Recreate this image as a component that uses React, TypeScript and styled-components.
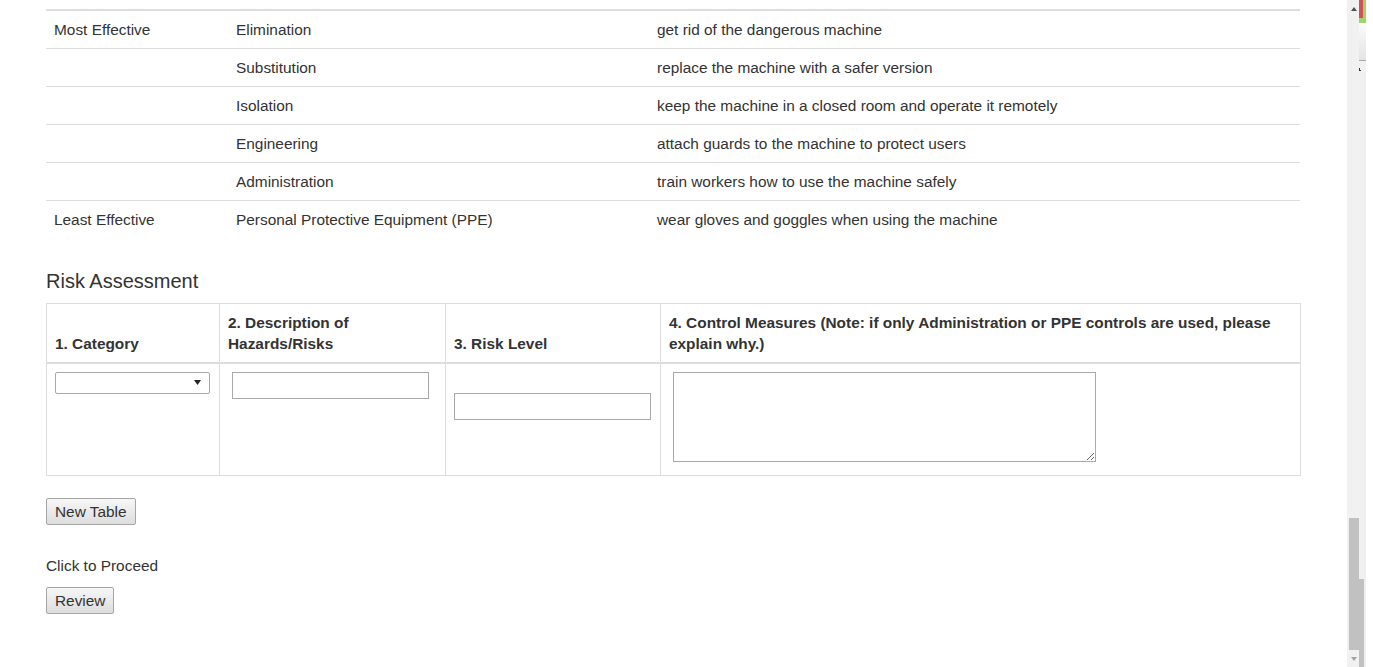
import React from "react";
import styled, { createGlobalStyle } from "styled-components";

const Global = createGlobalStyle`
  html, body { margin: 0; padding: 0; background: #fff; overflow: hidden; }
  body {
    font-family: "Liberation Sans", Arial, sans-serif;
    font-size: 15.4px;
    color: #333;
  }
  * { box-sizing: border-box; }
`;

const Page = styled.div`
  display: flex;
  height: 667px;
  width: 1373px;
`;

const Main = styled.main`
  flex: 0 0 1347px;
  padding: 9px 0 0 46px;
`;

const Content = styled.div`
  display: flex;
  flex-direction: column;
  align-items: flex-start;
  width: 1254px;
`;

const ControlTable = styled.table`
  width: 1254px;
  table-layout: fixed;
  border-collapse: collapse;
  border-spacing: 0;
`;

const ControlCell = styled.td<{ $first?: boolean }>`
  padding: 8px;
  line-height: 21px;
  vertical-align: top;
  border-top: ${(p) => (p.$first ? "2px" : "1px")} solid #ddd;
  text-align: left;
  white-space: nowrap;
`;

const SectionTitle = styled.h3`
  margin: 32px 0 11px;
  font-size: 20px;
  font-weight: normal;
  line-height: 22px;
  color: #333;
`;

const RiskTable = styled.table`
  width: 1254px;
  table-layout: fixed;
  border-collapse: collapse;
  border-spacing: 0;
  border: 1px solid #ddd;
`;

const HeadCell = styled.th`
  padding: 8px;
  line-height: 21px;
  font-weight: bold;
  text-align: left;
  vertical-align: bottom;
  border: 1px solid #ddd;
  border-bottom: 2px solid #ddd;
`;

const BodyCell = styled.td`
  padding: 8px;
  line-height: 21px;
  vertical-align: top;
  border: 1px solid #ddd;
  border-top: none;
  height: 111px;
`;

const SelectWrap = styled.div`
  position: relative;
  width: 155px;
  height: 22px;
`;

const Select = styled.select`
  appearance: none;
  -webkit-appearance: none;
  display: block;
  width: 155px;
  height: 22px;
  margin: 0;
  border: 1px solid #a9a9a9;
  border-radius: 2px;
  background: #fff;
  font-family: inherit;
  font-size: 13px;
`;

const SelectArrow = styled.svg`
  position: absolute;
  right: 9px;
  top: 8px;
  pointer-events: none;
`;

const BlankLine = styled.div`
  height: 21px;
`;

const TextInput = styled.input<{ $indent?: boolean }>`
  display: block;
  width: 197px;
  height: 27px;
  margin: 0 0 0 ${(p) => (p.$indent ? 4 : 0)}px;
  padding: 1px 2px;
  border: 1px solid #a9a9a9;
  border-radius: 0;
  background: #fff;
  font-family: inherit;
  font-size: 13px;
`;

const TextArea = styled.textarea`
  display: block;
  width: 423px;
  height: 90px;
  margin: 0 0 5px 4px;
  padding: 2px;
  border: 1px solid #a9a9a9;
  background: #fff;
  font-family: inherit;
  font-size: 13px;
`;

const Button = styled.button`
  display: block;
  height: 27px;
  margin: 0;
  padding: 0 8px;
  border: 1px solid #a6a6a6;
  border-radius: 2px;
  background: linear-gradient(#f7f7f7, #dddddd);
  font-family: "Liberation Sans", Arial, sans-serif;
  font-size: 15.4px;
  color: #333;
  line-height: 25px;
`;

const ActionRow = styled.div`
  margin-top: 22px;
`;

const Note = styled.p`
  margin: 30px 0 11px;
  line-height: 21px;
`;

/* ---- scrollbar drawing ---- */
const ScrollTrack = styled.div`
  flex: 0 0 19px;
  height: 667px;
  display: flex;
  background: #f1f1f1;
`;

const ArrowLane = styled.div`
  flex: 0 0 12px;
  display: flex;
  flex-direction: column;
  align-items: center;
`;

const ArrowBox = styled.div`
  height: 17px;
  width: 12px;
  display: flex;
  align-items: center;
  justify-content: center;
  padding-left: 2px;
`;

const LaneSpacer = styled.div`
  flex: 1;
`;

const Thumb = styled.div<{ $w: number; $h: number; $start?: boolean }>`
  width: ${(p) => p.$w}px;
  height: ${(p) => p.$h}px;
  background: #c1c1c1;
  align-self: ${(p) => (p.$start ? "flex-start" : "flex-end")};
`;

const MarkerLane = styled.div`
  flex: 0 0 7px;
  display: flex;
  flex-direction: column;
`;

const Cap = styled.div`
  display: flex;
  height: 18px;
`;

const CapPart = styled.div<{ $bg: string; $w?: number }>`
  flex: ${(p) => (p.$w ? `0 0 ${p.$w}px` : "1")};
  background: ${(p) => p.$bg};
`;

const CapStrip = styled.div`
  height: 5px;
  background: #a3d36b;
`;

const Shade = styled.div`
  height: 38px;
  background: linear-gradient(#fbfbfb, #e4e4e4);
  border-bottom: 1px solid #a8a8a8;
`;

const Tick = styled.div`
  margin-top: 7px;
  width: 2px;
  height: 3px;
  border-left: 1px solid #333;
  border-bottom: 1px solid #333;
`;

const Gutter = styled.div`
  flex: 0 0 7px;
  height: 667px;
  background: #fff;
`;

const controls = [
  ["Most Effective", "Elimination", "get rid of the dangerous machine"],
  ["", "Substitution", "replace the machine with a safer version"],
  ["", "Isolation", "keep the machine in a closed room and operate it remotely"],
  ["", "Engineering", "attach guards to the machine to protect users"],
  ["", "Administration", "train workers how to use the machine safely"],
  ["Least Effective", "Personal Protective Equipment (PPE)", "wear gloves and goggles when using the machine"],
];

export default function App() {
  return (
    <>
      <Global />
      <Page>
        <Main>
          <Content>
            <ControlTable>
              <colgroup>
                <col style={{ width: 182 }} />
                <col style={{ width: 421 }} />
                <col style={{ width: 651 }} />
              </colgroup>
              <tbody>
                {controls.map((r, i) => (
                  <tr key={i}>
                    {r.map((c, j) => (
                      <ControlCell key={j} $first={i === 0}>
                        {c}
                      </ControlCell>
                    ))}
                  </tr>
                ))}
              </tbody>
            </ControlTable>

            <SectionTitle>Risk Assessment</SectionTitle>

            <RiskTable>
              <colgroup>
                <col style={{ width: 173 }} />
                <col style={{ width: 226 }} />
                <col style={{ width: 215 }} />
                <col style={{ width: 640 }} />
              </colgroup>
              <thead>
                <tr>
                  <HeadCell>1. Category</HeadCell>
                  <HeadCell>2. Description of Hazards/Risks</HeadCell>
                  <HeadCell>3. Risk Level</HeadCell>
                  <HeadCell>
                    4. Control Measures (Note: if only Administration or PPE controls are used, please explain why.)
                  </HeadCell>
                </tr>
              </thead>
              <tbody>
                <tr>
                  <BodyCell>
                    <SelectWrap>
                      <Select defaultValue="">
                        <option value=""></option>
                      </Select>
                      <SelectArrow width="7" height="5" viewBox="0 0 7 5">
                        <path d="M0 0 H7 L3.5 5 Z" fill="#222" />
                      </SelectArrow>
                    </SelectWrap>
                  </BodyCell>
                  <BodyCell>
                    <TextInput type="text" $indent />
                  </BodyCell>
                  <BodyCell>
                    <BlankLine />
                    <TextInput type="text" />
                  </BodyCell>
                  <BodyCell>
                    <TextArea />
                  </BodyCell>
                </tr>
              </tbody>
            </RiskTable>

            <ActionRow>
              <Button>New Table</Button>
            </ActionRow>
            <Note>Click to Proceed</Note>
            <Button>Review</Button>
          </Content>
        </Main>

        <ScrollTrack>
          <ArrowLane>
            <ArrowBox>
              <svg width="6" height="4" viewBox="0 0 6 4">
                <path d="M3 0 L6 4 H0 Z" fill="#505050" />
              </svg>
            </ArrowBox>
            <LaneSpacer />
            <Thumb $w={10} $h={132} />
            <ArrowBox>
              <svg width="6" height="4" viewBox="0 0 6 4">
                <path d="M0 0 H6 L3 4 Z" fill="#a3a3a3" />
              </svg>
            </ArrowBox>
          </ArrowLane>
          <MarkerLane>
            <Cap>
              <CapPart $bg="#d05352" $w={4} />
              <CapPart $bg="#a3d36b" />
            </Cap>
            <CapStrip />
            <Shade />
            <Tick />
            <LaneSpacer />
            <Thumb $w={5} $h={88} $start />
          </MarkerLane>
        </ScrollTrack>
        <Gutter />
      </Page>
    </>
  );
}
